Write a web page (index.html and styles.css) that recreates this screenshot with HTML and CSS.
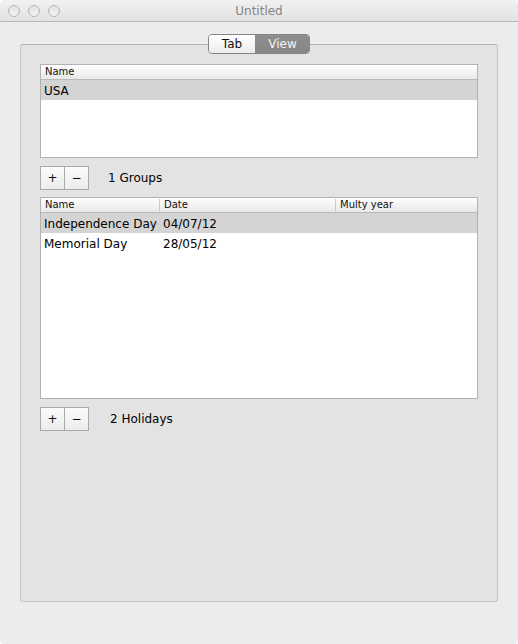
FILE: index.html
```html
<!DOCTYPE html>
<html>
<head>
<meta charset="utf-8">
<title>Untitled</title>
<link rel="stylesheet" href="styles.css">
</head>
<body>
<div class="window">
  <div class="titlebar">
    <div class="lights">
      <span class="light"></span><span class="light"></span><span class="light"></span>
    </div>
    <div class="title">Untitled</div>
  </div>
  <div class="content">
    <div class="tabbox">
      <div class="segmented">
        <span class="seg seg-tab">Tab</span><span class="seg seg-view">View</span>
      </div>
      <div class="table table-groups">
        <div class="thead">
          <div class="th col-full">Name</div>
        </div>
        <div class="row selected"><div class="td col-full">USA</div></div>
      </div>
      <div class="toolbar">
        <div class="btns"><span class="btn">+</span><span class="btn">&minus;</span></div>
        <span class="count count-groups">1 Groups</span>
      </div>
      <div class="table table-holidays">
        <div class="thead">
          <div class="th col-name">Name</div>
          <div class="th col-date">Date</div>
          <div class="th col-multi">Multy year</div>
        </div>
        <div class="row selected">
          <div class="td col-name">Independence Day</div>
          <div class="td col-date">04/07/12</div>
          <div class="td col-multi"></div>
        </div>
        <div class="row">
          <div class="td col-name">Memorial Day</div>
          <div class="td col-date">28/05/12</div>
          <div class="td col-multi"></div>
        </div>
      </div>
      <div class="toolbar">
        <div class="btns"><span class="btn">+</span><span class="btn">&minus;</span></div>
        <span class="count count-holidays">2 Holidays</span>
      </div>
    </div>
  </div>
</div>
</body>
</html>
```

FILE: styles.css
```css
html, body {
  margin: 0;
  padding: 0;
  background: #ffffff;
}
body {
  font-family: "DejaVu Sans", "Liberation Sans", sans-serif;
  font-size: 12px;
  color: #000;
}
.window {
  width: 518px;
  height: 644px;
  background: #ececec;
  border-radius: 5px 5px 4px 4px;
  overflow: hidden;
  display: flex;
  flex-direction: column;
}
.titlebar {
  height: 21px;
  border-bottom: 1px solid #b8b8b8;
  background: linear-gradient(#f1f1f1, #e2e2e2);
  display: flex;
  align-items: center;
  position: relative;
}
.lights {
  display: flex;
  gap: 8px;
  padding-left: 8px;
}
.light {
  width: 10px;
  height: 10px;
  border-radius: 50%;
  border: 1px solid #b4b4b4;
  background: linear-gradient(#e2e2e2, #f2f2f2);
}
.title {
  position: absolute;
  left: 0;
  right: 0;
  top: 0;
  height: 21px;
  line-height: 22px;
  text-align: center;
  color: #858585;
  font-size: 12px;
}
.content {
  padding: 22px 20px 0 20px;
}
.tabbox {
  position: relative;
  height: 537px;
  background: #e3e3e3;
  border: 1px solid #c3c3c3;
  border-top-color: #b3b3b3;
  border-radius: 3px;
  padding: 19px 19px 0 19px;
}
.segmented {
  position: absolute;
  top: -11px;
  left: 187px;
  display: flex;
  height: 20px;
  border: 1px solid #858585;
  border-radius: 4px;
  overflow: hidden;
  box-sizing: border-box;
}
.seg {
  display: flex;
  align-items: center;
  justify-content: center;
  font-size: 12px;
  height: 18px;
}
.seg-tab {
  width: 46px;
  background: linear-gradient(#ffffff, #ececec);
  color: #111;
  border-right: 1px solid #8a8a8a;
}
.seg-view {
  width: 53px;
  background: linear-gradient(#8e8e8e, #868686);
  color: #f4f4f4;
}
.table {
  background: #fff;
  border: 1px solid #b2b2b2;
  box-sizing: border-box;
}
.table-groups {
  height: 94px;
}
.table-holidays {
  height: 202px;
  margin-top: 7px;
}
.thead {
  display: flex;
  height: 14px;
  background: linear-gradient(#ffffff, #f3f3f3 50%, #e9e9e9);
  border-bottom: 1px solid #b8b8b8;
}
.th {
  font-size: 10px;
  line-height: 14px;
  padding-left: 4px;
  box-sizing: border-box;
  color: #111;
}
.th + .th {
  border-left: 1px solid #cacaca;
  height: 12px;
  line-height: 12px;
  margin-top: 1px;
}
.row {
  display: flex;
  height: 20px;
  align-items: center;
}
.row.selected {
  background: #d4d4d4;
}
.td {
  padding-left: 3px;
  padding-top: 2px;
  box-sizing: border-box;
  white-space: nowrap;
  font-size: 12px;
}
.td + .td {
  padding-left: 4px;
}
.col-full { flex: 1; }
.col-name { width: 118px; }
.col-date { width: 176px; }
.col-multi { flex: 1; }
.toolbar {
  display: flex;
  align-items: center;
  margin-top: 8px;
  height: 24px;
}
.btns {
  display: flex;
  border: 1px solid #a9a9a9;
  height: 22px;
  background: linear-gradient(#fbfbfb, #ececec);
}
.btn {
  width: 23px;
  display: flex;
  align-items: center;
  justify-content: center;
  font-size: 12px;
  color: #111;
}
.btn + .btn {
  border-left: 1px solid #a9a9a9;
}
.count {
  font-size: 12px;
}
.count-groups { margin-left: 19px; }
.count-holidays { margin-left: 21px; }
```
